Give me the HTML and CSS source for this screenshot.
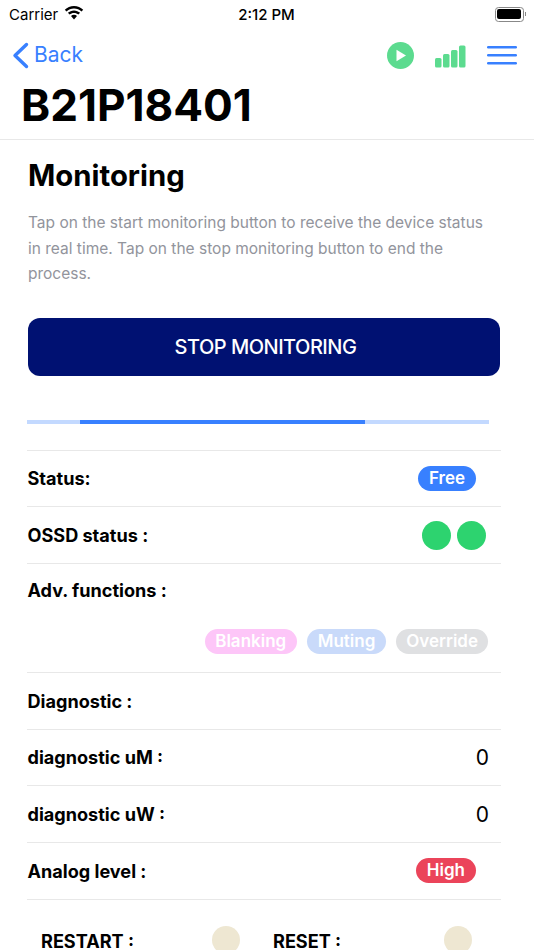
FILE: index.html
```html
<!DOCTYPE html>
<html lang="en">
<head>
    <meta charset="UTF-8">
    <meta name="viewport" content="width=device-width, initial-scale=1.0">
    <title>Monitoring</title>
    <link rel="stylesheet" href="styles.css">
</head>
<body>
    <div class="status-bar">
        <div class="carrier">
            <span>Carrier</span>
            <svg width="20" height="14" viewBox="0 0 20 14"><path d="M10 2.600c2.900 0 5.500 1.100 7.500 3l1.700-1.800C16.800 1.400 13.600 0 10 0S3.200 1.400.8 3.800l1.700 1.800c2-1.900 4.600-3 7.500-3z" fill="#000"/><path d="M10 6.900c1.700 0 3.200.6 4.400 1.700l1.700-1.800C14.500 5.300 12.400 4.400 10 4.400S5.500 5.300 3.900 6.800l1.700 1.800C6.800 7.500 8.300 6.900 10 6.900z" fill="#000"/><path d="M10 8.800c-1.200 0-2.200.4-3 1.200l3 3.400 3-3.400c-.8-.8-1.800-1.200-3-1.200z" fill="#000"/></svg>
        </div>
        <div class="clock">2:12 PM</div>
        <div class="battery">
            <div class="battery-body"><div class="battery-fill"></div></div>
            <div class="battery-tip"></div>
        </div>
    </div>

    <div class="header">
        <div class="nav">
            <a class="back">
                <svg width="17" height="27" viewBox="0 0 17 27"><path d="M14.500 2.500 3 13.500l11.500 11" fill="none" stroke="#3880ff" stroke-width="3.400" stroke-linecap="round" stroke-linejoin="round"/></svg>
                <span>Back</span>
            </a>
            <div class="nav-icons">
                <svg width="27" height="27" viewBox="0 0 27 27"><circle cx="13.500" cy="13.500" r="13.500" fill="#5cdb8f"/><path d="M9.500 7.800 19 13.500l-9.500 5.700z" fill="#fff"/></svg>
                <svg class="signal" width="31" height="23" viewBox="0 0 31 23"><rect x="0" y="13" width="6.500" height="9.500" rx="1.500" fill="#5cdb8f"/><rect x="8" y="9" width="6.500" height="13.500" rx="1.500" fill="#5cdb8f"/><rect x="16" y="5" width="6.500" height="17.500" rx="1.500" fill="#5cdb8f"/><rect x="24" y="0.500" width="6.500" height="22" rx="1.500" fill="#5cdb8f"/></svg>
                <svg class="menu" width="30" height="19" viewBox="0 0 30 19"><rect x="0" y="0" width="30" height="2.400" rx="1.200" fill="#3880ff"/><rect x="0" y="8" width="30" height="2.400" rx="1.200" fill="#3880ff"/><rect x="0" y="16" width="30" height="2.400" rx="1.200" fill="#3880ff"/></svg>
            </div>
        </div>
        <h1>B21P18401</h1>
    </div>

    <div class="content">
        <h2>Monitoring</h2>
        <p class="intro">Tap on the start monitoring button to receive the device status in real time. Tap on the stop monitoring button to end the process.</p>
        <button class="stop-btn">STOP MONITORING</button>

        <div class="progress"><div class="progress-bar"></div></div>

        <div class="row">
            <span class="label">Status:</span>
            <span class="pill pill-blue pill-status">Free</span>
        </div>
        <div class="row">
            <span class="label">OSSD status :</span>
            <div class="leds">
                <span class="led"></span>
                <span class="led"></span>
            </div>
        </div>
        <div class="row row-tall">
            <span class="label">Adv. functions :</span>
            <div class="functions">
                <span class="pill pill-pink">Blanking</span>
                <span class="pill pill-light">Muting</span>
                <span class="pill pill-grey">Override</span>
            </div>
        </div>
        <div class="row">
            <span class="label">Diagnostic :</span>
        </div>
        <div class="row">
            <span class="label">diagnostic uM :</span>
            <span class="value">0</span>
        </div>
        <div class="row">
            <span class="label">diagnostic uW :</span>
            <span class="value">0</span>
        </div>
        <div class="row">
            <span class="label">Analog level :</span>
            <span class="pill pill-red pill-status">High</span>
        </div>
        <div class="inputs">
            <div class="input-item">
                <span class="label">RESTART :</span>
                <span class="input-dot"></span>
            </div>
            <div class="input-item">
                <span class="label">RESET :</span>
                <span class="input-dot"></span>
            </div>
        </div>
    </div>
</body>
</html>
```

FILE: styles.css
```css
html, body {
    margin: 0;
    padding: 0;
    height: 950px;
    overflow: hidden;
}
body {
    font-family: Inter, "Liberation Sans", sans-serif;
    background-color: #fff;
    color: #000;
}
.status-bar {
    height: 28px;
    display: flex;
    align-items: center;
    justify-content: space-between;
    padding: 0 8px 0 9px;
    position: relative;
    font-size: 15px;
}
.carrier {
    display: flex;
    align-items: center;
    gap: 6px;
}
.carrier svg {
    margin-top: -2px;
}
.clock {
    position: absolute;
    left: -1px;
    right: 0;
    text-align: center;
    font-weight: 500;
}
.battery {
    display: flex;
    align-items: center;
}
.battery-body {
    width: 24px;
    height: 10px;
    padding: 1.500px;
    border: 1px solid #888;
    border-radius: 3.500px;
}
.battery-fill {
    height: 100%;
    background-color: #000;
    border-radius: 2px;
}
.battery-tip {
    width: 1.500px;
    height: 4px;
    margin-left: 1px;
    background-color: #888;
}
.header {
    height: 111px;
    border-bottom: 1px solid #e8e8e8;
}
.nav {
    height: 54px;
    display: flex;
    align-items: center;
    justify-content: space-between;
    padding: 0 17px 0 12px;
}
.back {
    display: flex;
    align-items: center;
    gap: 5px;
    color: #3880ff;
    font-size: 21px;
}
.back span {
    margin-top: -1px;
}
.nav-icons {
    display: flex;
    align-items: center;
}
.signal {
    margin-left: 21px;
    margin-top: 2px;
}
.menu {
    margin-left: 21px;
}
h1 {
    margin: -4px 0 0 21px;
    font-size: 44.100px;
    line-height: 54px;
    font-weight: 700;
}
.content {
    padding: 0 33px 0 27px;
}
h2 {
    margin: 17px 0 0 1px;
    font-size: 29.300px;
    line-height: 38px;
    font-weight: 700;
}
.intro {
    width: 462px;
    margin: 15px 0 0 1px;
    font-size: 15.500px;
    line-height: 25.500px;
    color: #92949c;
}
.stop-btn {
    display: block;
    width: 472px;
    height: 58px;
    margin: 31px 0 0 1px;
    padding: 0 0 0 3px;
    border: none;
    border-radius: 12px;
    background-color: #001172;
    color: #fff;
    font-family: inherit;
    font-size: 20px;
    font-weight: 500;
    letter-spacing: -0.500px;
}
.progress {
    width: 462px;
    height: 4px;
    margin-top: 44px;
    background-color: #c3d9ff;
}
.progress-bar {
    width: 285px;
    height: 100%;
    margin-left: 53px;
    background-color: #3880ff;
}
.progress + .row {
    margin-top: 26px;
}
.row {
    height: 55.700px;
    display: flex;
    align-items: center;
    justify-content: space-between;
    border-top: 1px solid #e8e8e8;
}
.row-tall {
    height: 108px;
    display: block;
}
.label {
    margin-left: 0.500px;
    font-size: 18.100px;
    font-weight: 700;
}
.row-tall .label {
    display: block;
    padding-top: 15px;
}
.pill {
    display: inline-block;
    height: 25px;
    line-height: 25px;
    padding: 0 10.500px;
    border-radius: 13px;
    color: #fff;
    font-size: 17px;
    font-weight: 600;
}
.pill-status {
    margin-right: 25px;
    padding: 0 11px;
}
.pill-blue { background-color: #3880ff; }
.pill-red { background-color: #eb445a; }
.pill-pink { background-color: #fdc6f8; }
.pill-light { background-color: #c9dafa; padding: 0 11px; }
.pill-grey { background-color: #dfe0e2; padding: 0 10px; }
.leds {
    display: flex;
    gap: 6px;
    margin-right: 15px;
}
.led {
    width: 29px;
    height: 29px;
    border-radius: 50%;
    background-color: #2dd36f;
}
.functions {
    display: flex;
    justify-content: flex-end;
    gap: 10px;
    margin: 28px 13px 0 0;
}
.value {
    margin-right: 12px;
    font-size: 21px;
}
.inputs {
    display: flex;
    border-top: 1px solid #e8e8e8;
    padding: 26px 0 0 13.500px;
}
.input-item {
    flex: 0 0 232px;
    display: flex;
    justify-content: space-between;
}
.input-item .label {
    line-height: 18px;
    padding-top: 6px;
}
.input-dot {
    width: 28px;
    height: 28px;
    margin-right: 33px;
    border-radius: 50%;
    background-color: #eee7d2;
}
```
